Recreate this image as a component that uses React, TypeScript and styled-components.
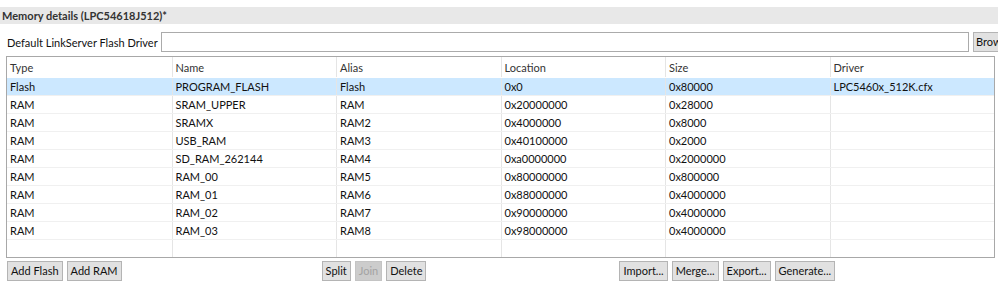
import styled, { createGlobalStyle } from "styled-components";

const GlobalStyle = createGlobalStyle`
  html, body {
    margin: 0;
    padding: 0;
    background: #ffffff;
    overflow: hidden;
  }
  body {
    font-family: Lato, "Noto Sans", sans-serif;
    font-size: 11px;
    color: #111111;
  }
`;

const Page = styled.div`
  width: 998px;
  height: 288px;
  padding-top: 7px;
  box-sizing: border-box;
  overflow: hidden;
`;

const TitleBar = styled.div`
  height: 17px;
  line-height: 17px;
  background: #e8e8e8;
  padding-left: 2px;
  font-weight: 700;
  color: #333333;
`;

const DriverRow = styled.div`
  display: flex;
  align-items: center;
  height: 20px;
  margin-top: 8px;
  padding-left: 7px;
  white-space: nowrap;
`;

const Label = styled.span`
  margin-right: 3px;
`;

const TextInput = styled.div`
  flex: 1;
  height: 20px;
  box-sizing: border-box;
  border: 1px solid #ababab;
  background: #ffffff;
`;

const Button = styled.button<{ $disabled?: boolean }>`
  height: 20px;
  box-sizing: border-box;
  padding: 0 3px;
  border: 1px solid ${(p) => (p.$disabled ? "#c4c4c4" : "#b4b4b4")};
  background: ${(p) => (p.$disabled ? "#cccccc" : "#e1e1e1")};
  color: ${(p) => (p.$disabled ? "#a3a3a3" : "#111111")};
  font-family: inherit;
  font-size: 11px;
  line-height: 18px;
  white-space: nowrap;
`;

const BrowseButton = styled(Button)`
  flex: none;
  width: 56px;
  margin-left: 4px;
  margin-right: -31px;
  text-align: left;
  padding-left: 2px;
`;

const Table = styled.div`
  margin: 4px 3px 0 6px;
  height: 202px;
  box-sizing: border-box;
  border: 1px solid #a8a8a8;
  overflow: hidden;
`;

const Row = styled.div<{ $selected?: boolean; $header?: boolean }>`
  display: grid;
  grid-template-columns: repeat(6, 1fr);
  height: ${(p) => (p.$header ? "21px" : "18px")};
  background: ${(p) => (p.$selected ? "#cce8ff" : "#ffffff")};
  border-bottom: 1px solid ${(p) => (p.$header ? "#ffffff" : "#f0f0f0")};
  box-sizing: border-box;
`;

const Cell = styled.div`
  padding-left: 3px;
  line-height: 17px;
  border-left: 1px solid #e5e5e5;
  white-space: nowrap;
  overflow: hidden;
  &:first-child {
    border-left: none;
  }
`;

const HeaderCell = styled(Cell)`
  line-height: 21px;
  color: #333333;
`;

const ButtonBar = styled.div`
  display: flex;
  align-items: center;
  margin-top: 3px;
  padding-left: 7px;
`;

const Group = styled.div<{ $offset?: number }>`
  display: flex;
  gap: 4px;
  margin-left: ${(p) => p.$offset ?? 0}px;
`;

const columns = ["Type", "Name", "Alias", "Location", "Size", "Driver"];

const rows: string[][] = [
  ["Flash", "PROGRAM_FLASH", "Flash", "0x0", "0x80000", "LPC5460x_512K.cfx"],
  ["RAM", "SRAM_UPPER", "RAM", "0x20000000", "0x28000", ""],
  ["RAM", "SRAMX", "RAM2", "0x4000000", "0x8000", ""],
  ["RAM", "USB_RAM", "RAM3", "0x40100000", "0x2000", ""],
  ["RAM", "SD_RAM_262144", "RAM4", "0xa0000000", "0x2000000", ""],
  ["RAM", "RAM_00", "RAM5", "0x80000000", "0x800000", ""],
  ["RAM", "RAM_01", "RAM6", "0x88000000", "0x4000000", ""],
  ["RAM", "RAM_02", "RAM7", "0x90000000", "0x4000000", ""],
  ["RAM", "RAM_03", "RAM8", "0x98000000", "0x4000000", ""],
  ["", "", "", "", "", ""],
];

export default function App() {
  return (
    <Page>
      <GlobalStyle />
      <TitleBar>Memory details (LPC54618J512)*</TitleBar>
      <DriverRow>
        <Label>Default LinkServer Flash Driver</Label>
        <TextInput />
        <BrowseButton>Browse...</BrowseButton>
      </DriverRow>
      <Table>
        <Row $header>
          {columns.map((c) => (
            <HeaderCell key={c}>{c}</HeaderCell>
          ))}
        </Row>
        {rows.map((r, i) => (
          <Row key={i} $selected={i === 0}>
            {r.map((v, j) => (
              <Cell key={j}>{v}</Cell>
            ))}
          </Row>
        ))}
      </Table>
      <ButtonBar>
        <Group>
          <Button>Add Flash</Button>
          <Button>Add RAM</Button>
        </Group>
        <Group $offset={200}>
          <Button>Split</Button>
          <Button $disabled>Join</Button>
          <Button>Delete</Button>
        </Group>
        <Group $offset={193}>
          <Button>Import...</Button>
          <Button>Merge...</Button>
          <Button>Export...</Button>
          <Button>Generate...</Button>
        </Group>
      </ButtonBar>
    </Page>
  );
}
